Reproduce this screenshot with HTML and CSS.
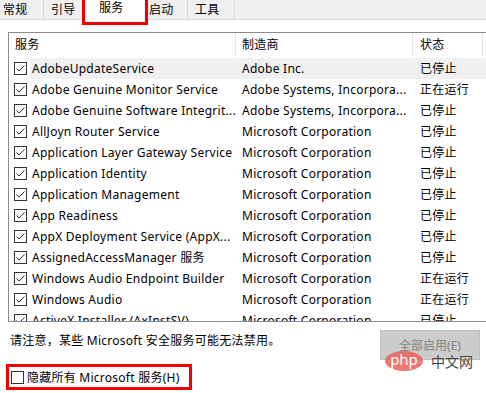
FILE: index.html
```html
<!DOCTYPE html>
<html lang="zh-CN">
<head>
<meta charset="UTF-8">
<title>系统配置 - 服务</title>
<link rel="stylesheet" href="styles.css">
</head>
<body>
<div class="window">

  <!-- Tabs -->
  <div class="tabs">
    <div class="tab tab-general">常规</div>
    <div class="tab tab-boot">引导</div>
    <div class="tab tab-services active">服务</div>
    <div class="tab tab-startup">启动</div>
    <div class="tab tab-tools">工具</div>
    <div class="tab-mark"></div>
  </div>

  <div class="panel">
    <!-- Service list -->
    <div class="listbox">
      <div class="list-head">
        <div class="head-cell col-name">服务</div>
        <div class="head-cell col-maker">制造商</div>
        <div class="head-cell col-state">状态</div>
        <div class="head-cell col-rest"></div>
      </div>
      <div class="rows" id="rows"></div>
    </div>

    <div class="footer">
      <p class="notice">请注意，某些 Microsoft 安全服务可能无法禁用。</p>
      <button class="enable-all" disabled>全部启用(E)</button>
    </div>

    <label class="hide-ms">
      <span class="box"></span>
      <span>隐藏所有 Microsoft 服务(H)</span>
    </label>
  </div>

  <!-- watermark -->
  <div class="watermark"><span class="wm-php">php</span><span class="wm-cn">中文网</span></div>
</div>

<script>
const services = [
  ['AdobeUpdateService', 'Adobe Inc.', '已停止'],
  ['Adobe Genuine Monitor Service', 'Adobe Systems, Incorpora...', '正在运行'],
  ['Adobe Genuine Software Integrit...', 'Adobe Systems, Incorpora...', '已停止'],
  ['AllJoyn Router Service', 'Microsoft Corporation', '已停止'],
  ['Application Layer Gateway Service', 'Microsoft Corporation', '已停止'],
  ['Application Identity', 'Microsoft Corporation', '已停止'],
  ['Application Management', 'Microsoft Corporation', '已停止'],
  ['App Readiness', 'Microsoft Corporation', '已停止'],
  ['AppX Deployment Service (AppX...', 'Microsoft Corporation', '已停止'],
  ['AssignedAccessManager 服务', 'Microsoft Corporation', '已停止'],
  ['Windows Audio Endpoint Builder', 'Microsoft Corporation', '正在运行'],
  ['Windows Audio', 'Microsoft Corporation', '正在运行'],
  ['ActiveX Installer (AxInstSV)', 'Microsoft Corporation', '已停止']
];

const check = '<svg width="13" height="13" viewBox="0 0 13 13"><rect x="0.5" y="0.5" width="12" height="12" fill="#fff" stroke="#333"/><polyline points="2.5,6.5 5,9 10.5,3.5" fill="none" stroke="#333" stroke-width="1"/></svg>';

const rows = document.getElementById('rows');
services.forEach((s, i) => {
  rows.innerHTML += `
    <div class="row${i === 0 ? ' focused' : ''}">
      <div class="check">${check}</div>
      <div class="cells">
        <div class="cell col-name">${s[0]}</div>
        <div class="cell col-maker">${s[1]}</div>
        <div class="cell col-state">${s[2]}</div>
      </div>
    </div>`;
});
</script>
</body>
</html>
```

FILE: styles.css
```css
body {
  margin: 0;
  font-family: "Noto Sans", "Noto Sans CJK SC", sans-serif;
  font-size: 12px;
  letter-spacing: 0.25px;
  color: #000;
  background: #fff;
}
.window {
  position: relative;
  width: 486px;
  height: 393px;
  overflow: hidden;
}

/* tabs */
.tabs {
  position: relative;
  display: flex;
  height: 19px;
  background: #f0f0f0;
  border-bottom: 1px solid #d9d9d9;
}
.tab {
  line-height: 20px;
  border-right: 1px solid #d9d9d9;
  box-sizing: border-box;
  white-space: nowrap;
}
.tab-general { width: 44px; padding-left: 3px; }
.tab-boot { width: 40px; padding-left: 7px; }
.tab-services { width: 60px; padding-left: 15px; }
.tab-startup { width: 44px; padding-left: 5px; }
.tab-tools { width: 47px; padding-left: 7px; }
.tab.active {
  background: #fff;
  height: 20px;
  line-height: 16px;
  border-right: none;
}
.tab-mark {
  position: absolute;
  left: 82px;
  top: -4px;
  width: 66px;
  height: 29px;
  box-sizing: border-box;
  border: 3px solid #f00000;
}

/* service list */
.panel {
  padding: 12px 0 0 8px;
}
.listbox {
  border: 1px solid #8c8c8c;
  border-right: none;
  height: 288px;
  overflow: hidden;
}
.list-head {
  display: flex;
  height: 25px;
}
.head-cell {
  box-sizing: border-box;
  line-height: 24px;
  border-right: 1px solid #e5e5e5;
  height: 24px;
}
.head-cell.col-name { width: 227px; padding-left: 6px; }
.head-cell.col-maker { width: 177px; padding-left: 6px; }
.head-cell.col-state { width: 70px; padding-left: 7px; }
.head-cell.col-rest { flex: 1; border-right: none; }

.row {
  display: flex;
  height: 21px;
}
.check {
  width: 21px;
  padding: 4px 0 0 5px;
  box-sizing: border-box;
}
.check svg { display: block; }
.cells {
  display: flex;
  flex: 1;
}
.row.focused .cells {
  background: #f0f0f0;
}
.cell {
  box-sizing: border-box;
  line-height: 21px;
  white-space: nowrap;
  overflow: hidden;
}
.cell.col-name { width: 206px; padding-left: 2px; }
.cell.col-maker { width: 177px; padding-left: 6px; }
.cell.col-state { width: 70px; padding-left: 7px; }

/* footer */
.footer {
  display: flex;
  justify-content: space-between;
  align-items: flex-start;
}
.notice {
  margin: 10px 0 0 2px;
  line-height: 18px;
}
.enable-all {
  margin-top: 8px;
  width: 100px;
  height: 30px;
  font: inherit;
  color: #838383;
  background: #cccccc;
  border: 1px solid #bfbfbf;
  margin-right: 6px;
}

.hide-ms {
  display: inline-flex;
  align-items: center;
  gap: 3px;
  margin: 4px 0 0 -2px;
  width: 186px;
  height: 26px;
  box-sizing: border-box;
  border: 3px solid #f00000;
  padding-left: 2px;
}
.hide-ms .box {
  width: 13px;
  height: 13px;
  box-sizing: border-box;
  border: 1px solid #333;
  background: #fff;
}

/* watermark */
.watermark {
  position: absolute;
  left: 385px;
  top: 351px;
  display: flex;
  align-items: center;
  gap: 8px;
  letter-spacing: 0;
}
.wm-php {
  width: 38px;
  height: 20px;
  border-radius: 50%;
  background: rgba(232, 96, 92, 0.85);
  color: #fff;
  font-size: 15px;
  line-height: 17px;
  text-align: center;
}
.wm-cn {
  font-size: 14px;
  color: #444;
}
```
